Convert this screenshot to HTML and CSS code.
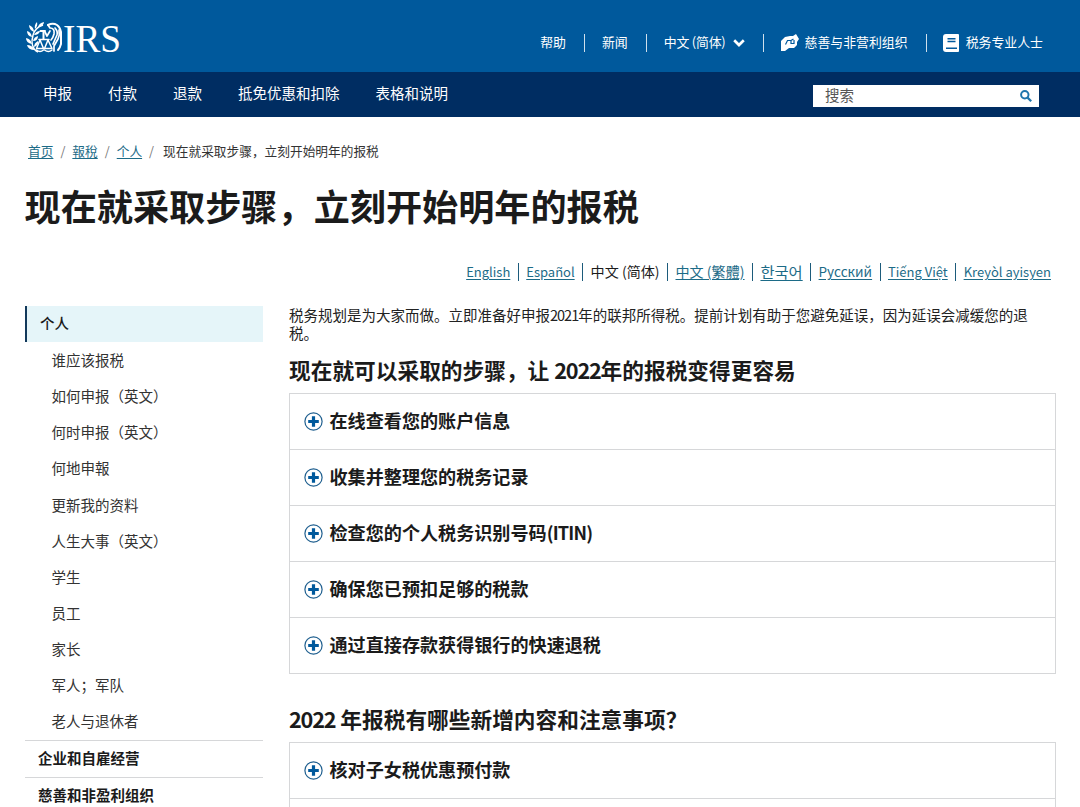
FILE: index.html
```
<!DOCTYPE html>
<html lang="zh-Hans">
<head>
<meta charset="utf-8">
<title>现在就采取步骤，立刻开始明年的报税</title>
<link rel="stylesheet" href="styles.css">
</head>
<body>
<svg class="defs" width="0" height="0" aria-hidden="true">
	<symbol id="plus" viewBox="0 0 19 19">
		<circle cx="9.5" cy="9.5" r="8.6" fill="#fff" stroke="#1f5f8f" stroke-width="1.2"/>
		<path d="M9.5 4.2v10.6M4.2 9.5h10.6" stroke="#00599c" stroke-width="3.2"/>
	</symbol>
</svg>

<header class="header">
	<a class="logo" href="#" aria-label="IRS">
		<svg width="104" height="54" viewBox="0 -9 104 54">
			<!-- laurel branch -->
			<path fill="none" stroke="#fff" stroke-width="1.500" d="M12 31C6 28 5 21 7 14C8 10 11 6 17 4"/>
			<path fill="#fff" d="M1 10q4 1 5 6q-5-1-5-6zM0 17q5 1 6 6q-6-1-6-6zM1 24q5 0 8 5q-7 0-8-5zM3 4q5 2 5 7q-5-2-5-7zM11 1q1 4-2 7q-1-4 2-7zM18 1q0 4-6 5q1-4 6-5zM8 14q2-4 6-4q-1 4-6 4zM7 20q1-4 5-5q0 5-5 5zM8 26q0-4 4-6q1 4-4 6z"/>
			<g fill="none" stroke="#fff" stroke-linecap="round" stroke-linejoin="round">
				<!-- scales -->
				<path stroke-width="2" d="M14.500 10h4.500M17.500 10v8"/>
				<path stroke-width="1.500" d="M13 18.500h10M14 19l-3.500 8.500h7zM22 19l-3.500 8.500h7.500z"/>
				<path stroke-width="1.500" d="M10.500 29q3.500 3 7 0M18.500 29q4 3 7.500 0"/>
				<!-- eagle head and wing -->
				<path stroke-width="2" d="M22 4q5-2.500 9 0q3 2 4 7v12q-1 4-3 6"/>
				<path stroke-width="1.700" d="M22 4l2 3q5 0 4 6q-1 4-3 6M19 11l2 4l3-5M29 7q3 3 2 7l-4 9M33 9q1 5-1 9l-4 7v5"/>
			</g>
			<text class="logo-text" x="37" y="30.500" textLength="58" lengthAdjust="spacingAndGlyphs">IRS</text>
		</svg>
	</a>
	<ul class="utility">
		<li class="u-help"><a href="#">帮助</a></li>
		<li class="u-news"><a href="#">新闻</a></li>
		<li class="u-lang"><a href="#">中文 (简体)<svg class="chevron" width="12" height="8" viewBox="0 0 12 8"><path d="M1.200 1.300L6 6l4.800-4.700" fill="none" stroke="#fff" stroke-width="2.700"/></svg></a></li>
		<li class="u-charity"><a href="#"><svg class="hands" width="19" height="17" viewBox="0 0 19 17"><path fill="#fff" d="M1 7l4-4l5-1h3l3-2l3 5l-2 3v3l-3 3H9l-4 3H1z"/><path d="M5.500 10.500L7.500 6.500H11v3h3V6M11 6.500L13.500 5" fill="none" stroke="#00599c" stroke-width="1.200"/></svg>慈善与非营利组织</a></li>
		<li class="u-pro"><a href="#"><svg class="book" width="16" height="18" viewBox="0 0 16 18"><path fill="#fff" d="M3 0h12q1 0 1 1v16q0 1-1 1H3q-3 0-3-3V3q0-3 3-3z"/><path d="M4.500 4.700h8M4.500 7.500h8M3 14.300h11" stroke="#00599c" stroke-width="1.500"/></svg>税务专业人士</a></li>
	</ul>
</header>

<nav class="navbar">
	<ul class="menu">
		<li><a href="#">申报</a></li>
		<li><a href="#">付款</a></li>
		<li><a href="#">退款</a></li>
		<li><a href="#">抵免优惠和扣除</a></li>
		<li><a href="#">表格和说明</a></li>
	</ul>
	<div class="search">
		<span>搜索</span>
		<svg width="12" height="12" viewBox="0 0 12 12"><circle cx="4.800" cy="4.800" r="3.700" fill="none" stroke="#1f76ad" stroke-width="2"/><path d="M7.600 7.600L11.200 11.200" stroke="#1f76ad" stroke-width="2.200"/></svg>
	</div>
</nav>

<ol class="breadcrumb">
	<li><a href="#">首页</a></li>
	<li><a href="#">報稅</a></li>
	<li><a href="#">个人</a></li>
	<li>现在就采取步骤，立刻开始明年的报税</li>
</ol>

<h1>现在就采取步骤，立刻开始明年的报税</h1>

<ul class="languages">
	<li><a href="#">English</a></li>
	<li><a href="#">Español</a></li>
	<li class="han">中文 (简体)</li>
	<li class="han"><a href="#" lang="zh-Hant">中文 (繁體)</a></li>
	<li class="hangul"><a href="#" lang="ko">한국어</a></li>
	<li class="cyrillic"><a href="#">Русский</a></li>
	<li><a href="#">Tiếng Việt</a></li>
	<li><a href="#">Kreyòl ayisyen</a></li>
</ul>

<div class="content">
	<aside class="sidebar">
		<a class="active" href="#">个人</a>
		<ul>
			<li><a href="#">谁应该报税</a></li>
			<li><a href="#">如何申报（英文）</a></li>
			<li><a href="#">何时申报（英文）</a></li>
			<li><a href="#">何地申報</a></li>
			<li><a href="#">更新我的资料</a></li>
			<li><a href="#">人生大事（英文）</a></li>
			<li><a href="#">学生</a></li>
			<li><a href="#">员工</a></li>
			<li><a href="#">家长</a></li>
			<li><a href="#">军人；军队</a></li>
			<li><a href="#">老人与退休者</a></li>
		</ul>
		<a class="section" href="#">企业和自雇经营</a>
		<a class="section" href="#">慈善和非盈利组织</a>
	</aside>
	<main class="main">
		<p>税务规划是为大家而做。立即准备好申报<span class="num">2021</span>年的联邦所得税。提前计划有助于您避免延误，因为延误会减缓您的退税。</p>
		<h2>现在就可以采取的步骤，让 <span class="num">2022</span>年的报税变得更容易</h2>
		<div class="accordion">
			<h3><svg width="19" height="19"><use href="#plus"/></svg><span>在线查看您的账户信息</span></h3>
			<h3><svg width="19" height="19"><use href="#plus"/></svg><span>收集并整理您的税务记录</span></h3>
			<h3><svg width="19" height="19"><use href="#plus"/></svg><span>检查您的个人税务识别号码<span class="num">(ITIN)</span></span></h3>
			<h3><svg width="19" height="19"><use href="#plus"/></svg><span>确保您已预扣足够的税款</span></h3>
			<h3><svg width="19" height="19"><use href="#plus"/></svg><span>通过直接存款获得银行的快速退税</span></h3>
		</div>
		<h2 class="second"><span class="num">2022</span> 年报税有哪些新增内容和注意事项？</h2>
		<div class="accordion last">
			<h3><svg width="19" height="19"><use href="#plus"/></svg><span>核对子女税优惠预付款</span></h3>
		</div>
	</main>
</div>
</body>
</html>
```
FILE: styles.css
```
* {box-sizing: border-box;}
html {height: 807px;overflow: hidden;}
body {margin: 0;height: 807px;overflow: hidden;background: #fff;color: #1b1b1b;font-family: "Noto Sans CJK SC", sans-serif;font-size: 14.5px;}
ul, ol {list-style: none;margin: 0;padding: 0;}
a {color: inherit;text-decoration: none;}
h1, h2, h3, p {margin: 0;}
.defs {display: block;height: 0;}

/* top bar */
.header {display: flex;justify-content: space-between;height: 72px;background: #00599c;color: #fff;padding: 0 37px 0 26px;}
.logo {margin-top: 12px;height: 54px;}
.logo svg {display: block;}
.logo-text {font-family: "Liberation Serif", serif;font-size: 40px;fill: #fff;}
.utility {display: flex;align-items: center;height: 18px;margin-top: 34px;font-size: 12.9px;line-height: 18px;white-space: nowrap;}
.utility li {border-left: 1px solid #cfe0ec;padding: 0 17px;}
.utility li:first-child {border-left: 0;}
.utility a {display: flex;align-items: center;height: 18px;line-height: 15px;padding-bottom: 3px;}
.utility .u-help, .utility .u-news {padding-right: 18px;}
.utility .u-charity {padding: 0 18px 0 16px;}
.utility .u-pro {padding: 0 0 0 16px;}
.utility .u-lang {padding-right: 18px;letter-spacing: -.2px;}
.u-charity svg, .u-pro svg {position: relative;top: 1px;}
.chevron {margin: 2px 0 0 7px;}
.hands {margin-right: 6px;}
.book {margin-right: 7px;}

/* main menu */
.navbar {display: flex;justify-content: space-between;height: 45px;background: #002d62;color: #fff;padding: 0 41px 0 43px;}
.menu {display: flex;gap: 36px;font-size: 14.5px;line-height: 41px;}
.search {display: flex;align-items: center;justify-content: space-between;width: 226px;height: 22px;margin-top: 13px;padding: 0 7px 0 12px;background: #fff;color: #555;}
.search span {line-height: 22px;margin-top: -3px;}

.breadcrumb {display: flex;padding: 24px 0 0 28px;font-size: 12.7px;line-height: 19px;color: #333;}
.breadcrumb li + li:before {content: "/";color: #777;padding: 0 7px;}
.breadcrumb li:last-child:before {padding-right: 9px;}
.breadcrumb a, .languages a {color: #1c6b87;text-decoration: underline;text-underline-offset: 2px;}
h1 {padding-left: 24.5px;margin-top: 20px;font-size: 36.15px;line-height: 50px;}

.languages {display: flex;justify-content: flex-end;margin: 33px 29px 0 0;font-size: 13px;line-height: 17px;height: 18px;}
.languages li {padding-left: 7.3px;margin-left: 7.6px;border-left: 1px solid #1c5b7b;height: 18px;white-space: nowrap;}
.languages li:first-child {border-left: 0;}
.languages .han {font-size: 14.1px;}
.languages .hangul {font-size: 15.3px;}
.languages .cyrillic {font-size: 13.5px;}

.content {display: flex;gap: 26px;padding: 25px 25px 0;height: 526px;overflow: hidden;}

.sidebar {width: 238px;flex: none;}
.sidebar a {display: block;}
.sidebar .active {height: 36px;line-height: 34px;background: #e5f5f9;border-left: 2px solid #12395b;padding-left: 13px;font-weight: 500;}
.sidebar li {height: 36.15px;line-height: 35px;padding-left: 26.5px;color: #333;}
.sidebar .section {height: 37px;line-height: 34px;border-top: 1px solid #d6d7d9;padding-left: 13px;font-weight: 700;}

.main {width: 767px;flex: none;}
.main p {line-height: 18px;width: 750px;color: #222;}
.main p .num {letter-spacing: -1px;}
h2 {font-size: 21.7px;line-height: 30px;margin-top: 13px;margin-bottom: 8px;white-space: nowrap;}
h2 .num {letter-spacing: -1.2px;}
h2.second {margin-top: 30px;}
.accordion {border: 1px solid #d6d7d9;}
.accordion h3 {display: flex;align-items: center;height: 56px;padding: 0 0 1px 14px;font-size: 18.1px;line-height: 24px;border-top: 1px solid #d6d7d9;}
.accordion h3:first-child {height: 55px;border-top: 0;}
.accordion h3 > span {padding-bottom: 3px;}
.accordion h3 .num {letter-spacing: -.8px;}
.accordion svg {margin-right: 6.5px;}
.accordion.last {height: 66px;}
.accordion.last h3 {height: 56px;border-bottom: 1px solid #d6d7d9;}
```
